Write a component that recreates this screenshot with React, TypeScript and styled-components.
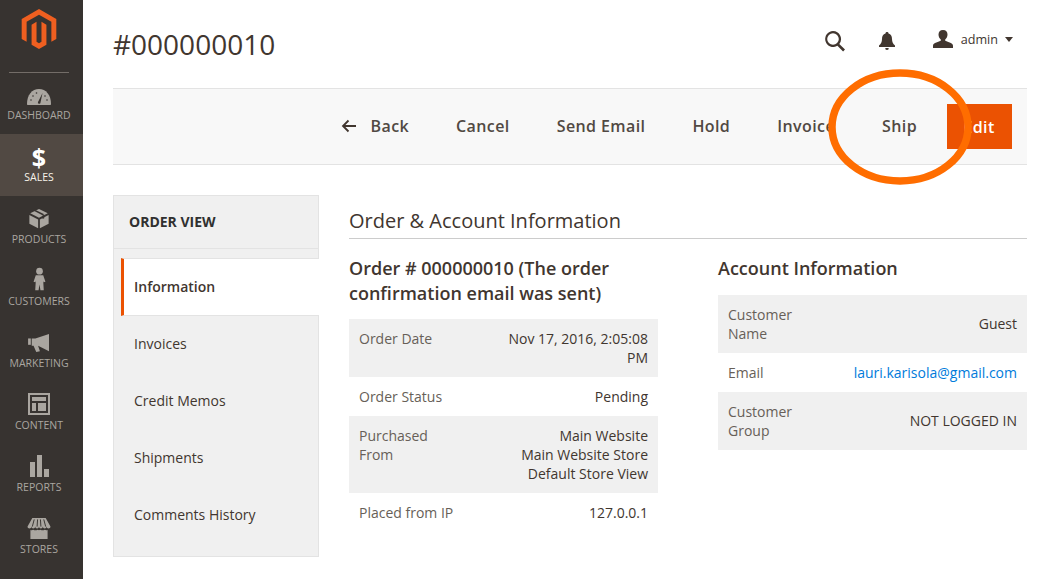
import React from 'react'
import styled, { createGlobalStyle } from 'styled-components'
import { SiMagento } from 'react-icons/si'

const GlobalStyle = createGlobalStyle`
  html, body {
    margin: 0;
    padding: 0;
    background: #fff;
    overflow: hidden;
  }
  body {
    font-family: 'Open Sans', sans-serif;
    color: #41362f;
  }
`

const Page = styled.div`
  position: relative;
  display: flex;
  width: 1056px;
  height: 579px;
  overflow: hidden;
`

const Sidebar = styled.nav`
  width: 83px;
  flex-shrink: 0;
  background: #373330;
  display: flex;
  flex-direction: column;
`

const LogoBox = styled.div`
  height: 73px;
  margin: 0 14px -1px 9px;
  border-bottom: 1px solid #736d68;
  display: flex;
  justify-content: center;
  padding-top: 9px;
  box-sizing: border-box;
  color: #ef5f20;
  font-size: 40px;
`

const NavItem = styled.a<{ $active?: boolean }>`
  height: 62px;
  flex-shrink: 0;
  display: flex;
  flex-direction: column;
  align-items: center;
  justify-content: flex-end;
  padding-bottom: 12px;
  box-sizing: border-box;
  font-size: 10.5px;
  line-height: 14px;
  text-transform: uppercase;
  padding-right: 5px;
  background: ${({ $active }) => ($active ? '#514943' : 'transparent')};
  color: ${({ $active }) => ($active ? '#f7f3eb' : '#aaa6a0')};
`

const NavIcon = styled.svg`
  display: block;
  margin-bottom: 3px;
  fill: #aaa6a0;
`

const Dollar = styled.span`
  font-size: 25px;
  line-height: 26px;
  font-weight: 700;
  color: #fff;
`

const Main = styled.main`
  flex: 1;
  min-width: 0;
  padding: 0 29px 0 30px;
`

const TopBar = styled.header`
  height: 88px;
  display: flex;
  align-items: center;
  justify-content: space-between;
  box-sizing: border-box;
`

const PageTitle = styled.h1`
  margin: 0;
  font-size: 28px;
  line-height: 36px;
  font-weight: 400;
  color: #41362f;
`

const Actions = styled.div`
  display: flex;
  align-items: center;
  margin: 0 14px 10px 0;
`

const ActionIcon = styled.svg`
  display: block;
  fill: #41362f;
`

const SearchIcon = styled(ActionIcon)`
  margin: 4px 33px 0 0;
`

const BellIcon = styled(ActionIcon)`
  margin: 4px 38px 0 0;
`

const UserName = styled.span`
  font-size: 12.6px;
  margin-left: 8px;
  color: #41362f;
`

const Caret = styled.span`
  width: 0;
  height: 0;
  margin-left: 7px;
  border-left: 4.5px solid transparent;
  border-right: 4.5px solid transparent;
  border-top: 5px solid #41362f;
`

const Toolbar = styled.div`
  height: 77px;
  box-sizing: border-box;
  background: #f8f8f8;
  border-top: 1px solid #e3e3e3;
  border-bottom: 1px solid #e3e3e3;
  display: flex;
  align-items: center;
  justify-content: flex-end;
  padding-right: 15px;
`

const ToolButton = styled.span`
  font-size: 16px;
  line-height: 22px;
  font-weight: 600;
  letter-spacing: 0.4px;
  color: #514943;
  margin: 0 47px 2px 0;
  display: flex;
  align-items: center;
  &:nth-last-child(2) {
    margin-right: 30px;
  }
`

const BackArrow = styled.svg`
  display: block;
  margin-right: 14px;
  fill: none;
  stroke: #41362f;
  stroke-width: 1.8;
`

const PrimaryButton = styled.span`
  width: 65px;
  height: 45px;
  padding-right: 1px;
  box-sizing: border-box;
  background: #eb5202;
  color: #fff;
  font-size: 16px;
  font-weight: 600;
  letter-spacing: 0.4px;
  display: flex;
  align-items: center;
  justify-content: center;
`

const Highlight = styled.svg`
  position: absolute;
  left: 828px;
  top: 69px;
  fill: none;
  stroke: #ff6d00;
  stroke-width: 7.5;
`

const Content = styled.div`
  display: flex;
  margin-top: 30px;
  gap: 30px;
`

const SidePanel = styled.aside`
  width: 206px;
  height: 362px;
  flex-shrink: 0;
  box-sizing: border-box;
  background: #f0f0f0;
  border: 1px solid #e3e3e3;
`

const SideTitle = styled.div`
  height: 53px;
  box-sizing: border-box;
  padding: 0 0 2px 15px;
  display: flex;
  align-items: center;
  font-size: 14px;
  font-weight: 700;
  color: #303030;
  border-bottom: 1px solid #e3e3e3;
`

const SideMenu = styled.ul`
  list-style: none;
  margin: 9px -1px 0 7px;
  padding: 0;
`

const SideItem = styled.li<{ $active?: boolean }>`
  height: ${({ $active }) => ($active ? '58px' : '57px')};
  box-sizing: border-box;
  display: flex;
  align-items: center;
  font-size: 14px;
  color: #41362f;
  padding: 0 0 2px ${({ $active }) => ($active ? '10px' : '13px')};
  background: ${({ $active }) => ($active ? '#fff' : 'transparent')};
  font-weight: ${({ $active }) => ($active ? 600 : 400)};
  border-left: ${({ $active }) => ($active ? '3px solid #eb5202' : 'none')};
  border-top: ${({ $active }) => ($active ? '1px solid #e3e3e3' : 'none')};
  border-bottom: ${({ $active }) => ($active ? '1px solid #e3e3e3' : 'none')};
`

const Details = styled.section`
  flex: 1;
  min-width: 0;
`

const SectionTitle = styled.h2`
  margin: 0;
  height: 44px;
  box-sizing: border-box;
  padding-top: 11px;
  font-size: 20px;
  line-height: 29px;
  font-weight: 400;
  color: #41362f;
  border-bottom: 1px solid #cccccc;
`

const Columns = styled.div`
  display: grid;
  grid-template-columns: 309px 309px;
  column-gap: 60px;
  margin-top: 17px;
`

const ColumnTitle = styled.h3`
  margin: 0 0 13px;
  font-size: 18px;
  line-height: 25px;
  font-weight: 600;
  color: #41362f;
`

const AccountTitle = styled(ColumnTitle)`
  margin-bottom: 14px;
`

const InfoTable = styled.table`
  width: 100%;
  table-layout: fixed;
  border-collapse: collapse;
  font-size: 14px;
  line-height: 19px;
  & tr:nth-child(odd) {
    background: #f0f0f0;
  }
`

const InfoLabel = styled.th`
  width: 125px;
  box-sizing: border-box;
  padding: 10px;
  text-align: left;
  font-weight: 400;
  color: #675f58;
  vertical-align: top;
`

const InfoValue = styled.td`
  padding: 9.6px 10px 10.4px;
  text-align: right;
  vertical-align: middle;
  color: #41362f;
`

const EmailLink = styled.a`
  color: #007bdb;
`

const Row: React.FC<{ label: string; children: React.ReactNode }> = ({ label, children }) => (
  <tr>
    <InfoLabel>{label}</InfoLabel>
    <InfoValue>{children}</InfoValue>
  </tr>
)

const GaugeIcon = () => (
  <NavIcon width="24" height="17" viewBox="0 0 24 17">
    <path d="M1 17C.4 17 0 16.600 0 16 0 7 5 1 12 1s12 6 12 15c0 .6-.4 1-1 1z" />
    <path d="M11 14l4.500-9-2 9.500a1.300 1.300 0 1 1-2.500-.5z" fill="#373330" />
    <circle cx="4" cy="12" r=".8" fill="#373330" />
    <circle cx="6" cy="8" r=".8" fill="#373330" />
    <circle cx="9.500" cy="5" r=".8" fill="#373330" />
    <circle cx="18" cy="8" r=".8" fill="#373330" />
    <circle cx="20" cy="12" r=".8" fill="#373330" />
  </NavIcon>
)

const BoxIcon = () => (
  <NavIcon width="20" height="21" viewBox="0 0 22 24">
    <path d="M11 1l10 5-10 5L1 6z" />
    <path d="M0 8l10 5v10L0 18z" />
    <path d="M22 8l-10 5v10l10-5z" />
    <path d="M5 3.200l10 5 2-1-10-5z" fill="#373330" />
    <path d="M15 8.600l2-1v4l-2 1z" fill="#373330" />
  </NavIcon>
)

const PersonIcon = () => (
  <NavIcon width="13" height="24" viewBox="0 0 14 24">
    <circle cx="7" cy="3.600" r="3.600" />
    <path d="M3 8h8l2.400 7-1.900.6-.5-1.600.6 10H8l-1-6-1 6H2.400l.6-10-.5 1.600L.6 15z" />
  </NavIcon>
)

const MegaphoneIcon = () => (
  <NavIcon width="22" height="20" viewBox="0 0 24 22">
    <path d="M0 6h3v7H0z" />
    <path d="M4 6h4l15-5v19L11 14l2 6-4 1-3-7H4z" />
  </NavIcon>
)

const LayoutIcon = () => (
  <NavIcon width="22" height="22" viewBox="0 0 22 22">
    <path fillRule="evenodd" d="M0 0h22v22H0zM2 2v18h18V2z" />
    <path d="M4 4h14v4H4zM4 10h4v8H4zM10 10h8v8h-8z" />
  </NavIcon>
)

const BarsIcon = () => (
  <NavIcon width="20" height="22" viewBox="0 0 20 22">
    <path d="M1 7h5v15H1zM8 0h5v22H8zM15 14h5v8h-5z" />
  </NavIcon>
)

const StoreIcon = () => (
  <NavIcon width="24" height="21" viewBox="0 0 24 22">
    <path d="M5 0h14l5 9c0 1.500-1 2-2 2-1.200 0-2-.7-2-2 0 1.300-1 2-2 2s-2-.7-2-2c0 1.300-1 2-2 2s-2-.7-2-2c0 1.300-1 2-2 2s-2-.7-2-2c0 1.300-1 2-2 2s-2-.7-2-2c0 1.300-.8 2-2 2-1 0-2-.5-2-2z" />
    <path d="M3 12.500c1 .3 2 .3 3-.2 1.500.8 3 .8 4.500 0 1 .6 2 .6 3 0 1.500.8 3 .8 4.500 0 1 .5 2 .5 3 .2V22H3z" />
    <path d="M7 1.500L5 9M10.500 1.500L10 9M13.500 1.500L14 9M17 1.500L19 9" stroke="#373330" strokeWidth="1" />
  </NavIcon>
)

const App: React.FC = () => (
  <Page>
    <GlobalStyle />
    <Sidebar>
      <LogoBox>
        <SiMagento />
      </LogoBox>
      <NavItem>
        <GaugeIcon />
        Dashboard
      </NavItem>
      <NavItem $active>
        <Dollar>$</Dollar>
        Sales
      </NavItem>
      <NavItem>
        <BoxIcon />
        Products
      </NavItem>
      <NavItem>
        <PersonIcon />
        Customers
      </NavItem>
      <NavItem>
        <MegaphoneIcon />
        Marketing
      </NavItem>
      <NavItem>
        <LayoutIcon />
        Content
      </NavItem>
      <NavItem>
        <BarsIcon />
        Reports
      </NavItem>
      <NavItem>
        <StoreIcon />
        Stores
      </NavItem>
    </Sidebar>

    <Main>
      <TopBar>
        <PageTitle>#000000010</PageTitle>
        <Actions>
          <SearchIcon width="22" height="22" viewBox="0 0 22 22">
            <path
              fillRule="evenodd"
              d="M9 1a8 8 0 0 1 6.300 12.900l5.700 5.700-1.900 1.900-5.700-5.700A8 8 0 1 1 9 1zm0 2.200a5.800 5.800 0 1 0 0 11.600A5.800 5.800 0 0 0 9 3.200z"
            />
          </SearchIcon>
          <BellIcon width="16" height="20" viewBox="0 0 16 20">
            <path d="M8 1c1 0 1.500.6 1.500 1.400C12 3 13 5 13 8c0 3 1 5 3 6.500V16H0v-1.500C2 13 3 11 3 8c0-3 1-5 3.500-5.600C6.500 1.600 7 1 8 1z" />
            <path d="M6.300 17h3.400A1.700 1.700 0 0 1 8 19a1.700 1.700 0 0 1-1.700-2z" />
          </BellIcon>
          <ActionIcon width="20" height="18" viewBox="0 0 20 20" preserveAspectRatio="none">
            <path d="M10 0c3 0 4.500 2.200 4.500 5 0 2.300-1 4.500-2.300 5.500v1.500c1.500 1 7.800 2 7.800 5.500V20H0v-2.500c0-3.500 6.300-4.500 7.800-5.500v-1.500C6.500 9.500 5.500 7.300 5.500 5 5.500 2.200 7 0 10 0z" />
          </ActionIcon>
          <UserName>admin</UserName>
          <Caret />
        </Actions>
      </TopBar>

      <Toolbar>
        <ToolButton>
          <BackArrow width="16" height="14" viewBox="0 0 16 14">
            <path d="M15 7H2M7.500 1.500L2 7l5.500 5.500" />
          </BackArrow>
          Back
        </ToolButton>
        <ToolButton>Cancel</ToolButton>
        <ToolButton>Send Email</ToolButton>
        <ToolButton>Hold</ToolButton>
        <ToolButton>Invoice</ToolButton>
        <ToolButton>Ship</ToolButton>
        <PrimaryButton>Edit</PrimaryButton>
      </Toolbar>

      <Content>
        <SidePanel>
          <SideTitle>ORDER VIEW</SideTitle>
          <SideMenu>
            <SideItem $active>Information</SideItem>
            <SideItem>Invoices</SideItem>
            <SideItem>Credit Memos</SideItem>
            <SideItem>Shipments</SideItem>
            <SideItem>Comments History</SideItem>
          </SideMenu>
        </SidePanel>

        <Details>
          <SectionTitle>Order &amp; Account Information</SectionTitle>
          <Columns>
            <div>
              <ColumnTitle>Order # 000000010 (The order confirmation email was sent)</ColumnTitle>
              <InfoTable>
                <tbody>
                  <Row label="Order Date">Nov 17, 2016, 2:05:08 PM</Row>
                  <Row label="Order Status">Pending</Row>
                  <Row label="Purchased From">
                    Main Website
                    <br />
                    Main Website Store
                    <br />
                    Default Store View
                  </Row>
                  <Row label="Placed from IP">127.0.0.1</Row>
                </tbody>
              </InfoTable>
            </div>
            <div>
              <AccountTitle>Account Information</AccountTitle>
              <InfoTable>
                <tbody>
                  <Row label="Customer Name">Guest</Row>
                  <Row label="Email">
                    <EmailLink>lauri.karisola@gmail.com</EmailLink>
                  </Row>
                  <Row label="Customer Group">NOT LOGGED IN</Row>
                </tbody>
              </InfoTable>
            </div>
          </Columns>
        </Details>
      </Content>
    </Main>
    <Highlight width="144" height="116" viewBox="0 0 144 116">
      <ellipse cx="72" cy="58" rx="68" ry="54" />
    </Highlight>
  </Page>
)

export default App
